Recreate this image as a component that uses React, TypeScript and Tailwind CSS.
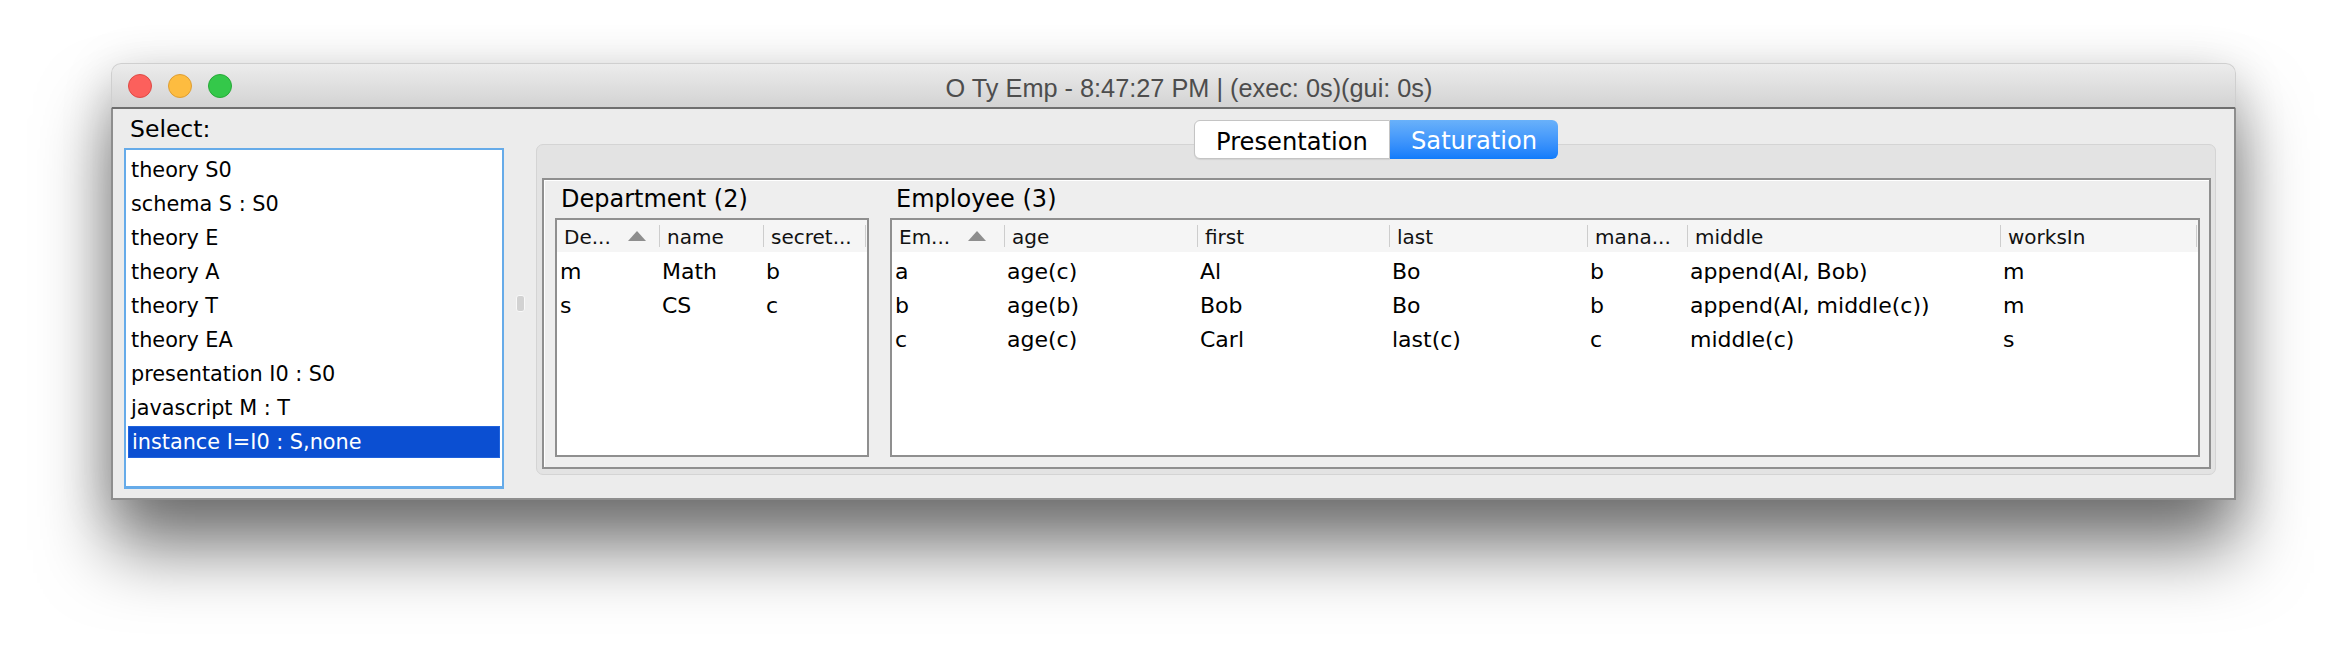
import React from "react";

const UI = { fontFamily: '"DejaVu Sans", "Noto Sans", sans-serif' };
const TITLE = { fontFamily: '"Liberation Sans", Arial, sans-serif' };

const listItems = [
  "theory S0",
  "schema S : S0",
  "theory E",
  "theory A",
  "theory T",
  "theory EA",
  "presentation I0 : S0",
  "javascript M : T",
  "instance I=I0 : S,none",
];

function SortArrow() {
  return (
    <svg width="18" height="10" viewBox="0 0 18 10">
      <polygon points="9,0 18,10 0,10" fill="#8e8e8e" />
    </svg>
  );
}

type Col = { name: string; w: number; sort?: boolean; arrowMr?: number };

function Table({ cols, rows, height }: { cols: Col[]; rows: string[][]; height: number }) {
  return (
    <div className="border-2 border-[#8f8f8f] bg-white flex flex-col" style={{ height }}>
      <div className="h-[32px] bg-[#f5f5f5] flex items-center text-[20px] text-[#111] shrink-0">
        {cols.map((c, i) => (
          <div key={i} className="flex items-center h-full shrink-0" style={{ width: c.w }}>
            {i > 0 && <div className="w-px h-[22px] bg-[#cdcdcd] shrink-0" />}
            <span className="pl-[7px] pt-[2px] whitespace-nowrap">{c.name}</span>
            {c.sort && (
              <span className="ml-auto flex items-center" style={{ marginRight: c.arrowMr }}>
                <SortArrow />
              </span>
            )}
          </div>
        ))}
        <div className="w-px h-[22px] bg-[#cdcdcd] shrink-0" />
      </div>
      <div className="pt-[2px] text-[22px] text-black">
        {rows.map((r, ri) => (
          <div key={ri} className="flex h-[34px] items-center">
            {r.map((cell, ci) => (
              <div key={ci} className="shrink-0 pl-[3px] whitespace-nowrap" style={{ width: cols[ci].w }}>
                {cell}
              </div>
            ))}
          </div>
        ))}
      </div>
    </div>
  );
}

export default function App() {
  const deptCols: Col[] = [
    { name: "De...", w: 102, sort: true, arrowMr: 13 },
    { name: "name", w: 104 },
    { name: "secret...", w: 102 },
  ];
  const deptRows = [
    ["m", "Math", "b"],
    ["s", "CS", "c"],
  ];
  const empCols: Col[] = [
    { name: "Em...", w: 112, sort: true, arrowMr: 18 },
    { name: "age", w: 193 },
    { name: "first", w: 192 },
    { name: "last", w: 198 },
    { name: "mana...", w: 100 },
    { name: "middle", w: 313 },
    { name: "worksIn", w: 196 },
  ];
  const empRows = [
    ["a", "age(c)", "Al", "Bo", "b", "append(Al, Bob)", "m"],
    ["b", "age(b)", "Bob", "Bo", "b", "append(Al, middle(c))", "m"],
    ["c", "age(c)", "Carl", "last(c)", "c", "middle(c)", "s"],
  ];

  return (
    <div className="w-[2348px] h-[662px] bg-white pl-[111px] pt-[63px] overflow-hidden" style={UI}>
      <div className="w-[2125px] h-[437px] flex flex-col rounded-t-[10px] shadow-[0_50px_70px_rgba(0,0,0,0.5),0_10px_50px_rgba(0,0,0,0.18)]">
        {/* Title bar */}
        <div className="h-[46px] shrink-0 rounded-t-[10px] border-t border-x border-[#cfcfcf] border-b-2 border-b-[#6f6f6f] bg-gradient-to-b from-[#ececec] to-[#d3d3d3] flex">
          <div className="flex items-start pt-[10px] pl-[16px] gap-[16px] shrink-0">
            <div className="w-[24px] h-[24px] rounded-full bg-[#fc605c] border border-[#de4a45]" />
            <div className="w-[24px] h-[24px] rounded-full bg-[#fdbc40] border border-[#de9e33]" />
            <div className="w-[24px] h-[24px] rounded-full bg-[#34c84a] border border-[#27a938]" />
          </div>
          <div className="flex-1 flex justify-center pr-[89px] pt-[5px]">
            <span className="text-[25.3px] leading-[38px] text-[#4d4d4d] whitespace-nowrap" style={TITLE}>
              O Ty Emp - 8:47:27 PM | (exec: 0s)(gui: 0s)
            </span>
          </div>
        </div>

        {/* Content */}
        <div className="flex-1 flex bg-[#ececec] border-x-2 border-b-2 border-[#8e8e8e]">
          {/* Left column */}
          <div className="pl-[11px] flex flex-col shrink-0">
            <div className="h-[39px] pt-[2px] pl-[6px] text-[23.5px] leading-[37px] text-black">Select:</div>
            <div className="w-[380px] h-[341px] border-2 border-b-[3px] border-[#66abe9] bg-white pt-[3px] text-[20.8px] text-black">
              {listItems.map((t, i) =>
                i === listItems.length - 1 ? (
                  <div key={i} className="h-[34px] py-[1px] px-[2px]">
                    <div className="h-[32px] leading-[30px] pl-[3px] bg-[#0b4fd2] border border-[#1f62dc] text-white whitespace-nowrap">
                      {t}
                    </div>
                  </div>
                ) : (
                  <div key={i} className="h-[34px] leading-[34px] pl-[5px] whitespace-nowrap">
                    {t}
                  </div>
                )
              )}
            </div>
          </div>

          {/* Divider */}
          <div className="w-[32px] shrink-0 flex items-center justify-center">
            <div className="w-[9px] h-[17px] rounded-[3px] bg-[#d2d2d2] border border-[#f8f8f8]" />
          </div>

          {/* Right: tabbed pane */}
          <div className="w-[1680px] shrink-0 pt-[11px] flex flex-col">
            <div className="h-[39px] flex justify-center relative z-10 shrink-0">
              <div className="w-[196px] h-[39px] bg-white border border-[#c4c4c4] rounded-l-[6px] flex justify-center text-[24.2px] leading-[34px] pt-[4px] text-black shadow-[0_1px_1px_rgba(0,0,0,0.08)]">
                Presentation
              </div>
              <div className="w-[168px] h-[39px] bg-gradient-to-b from-[#69b1fa] to-[#0f7cfb] rounded-r-[6px] flex justify-center text-[24.2px] leading-[34px] pt-[4px] text-white">
                Saturation
              </div>
            </div>
            <div className="-mt-[15px] h-[331px] bg-[#e3e3e3] border border-[#d4d4d4] rounded-[7px] pl-[5px] pr-[4px] pt-[33px] pb-[5px] flex">
              <div className="flex-1 border-2 border-[#8f8f8f] bg-[#eeeeee] shadow-[inset_1px_1px_0_#ffffff] pl-[11px] pr-[9px] flex gap-[21px]">
                <div className="w-[314px] shrink-0 flex flex-col">
                  <div className="h-[38px] leading-[38px] pl-[6px] text-[24px] text-black whitespace-nowrap">Department (2)</div>
                  <Table cols={deptCols} rows={deptRows} height={239} />
                </div>
                <div className="flex-1 flex flex-col">
                  <div className="h-[38px] leading-[38px] pl-[6px] text-[24px] text-black whitespace-nowrap">Employee (3)</div>
                  <Table cols={empCols} rows={empRows} height={239} />
                </div>
              </div>
            </div>
          </div>
        </div>
      </div>
    </div>
  );
}
